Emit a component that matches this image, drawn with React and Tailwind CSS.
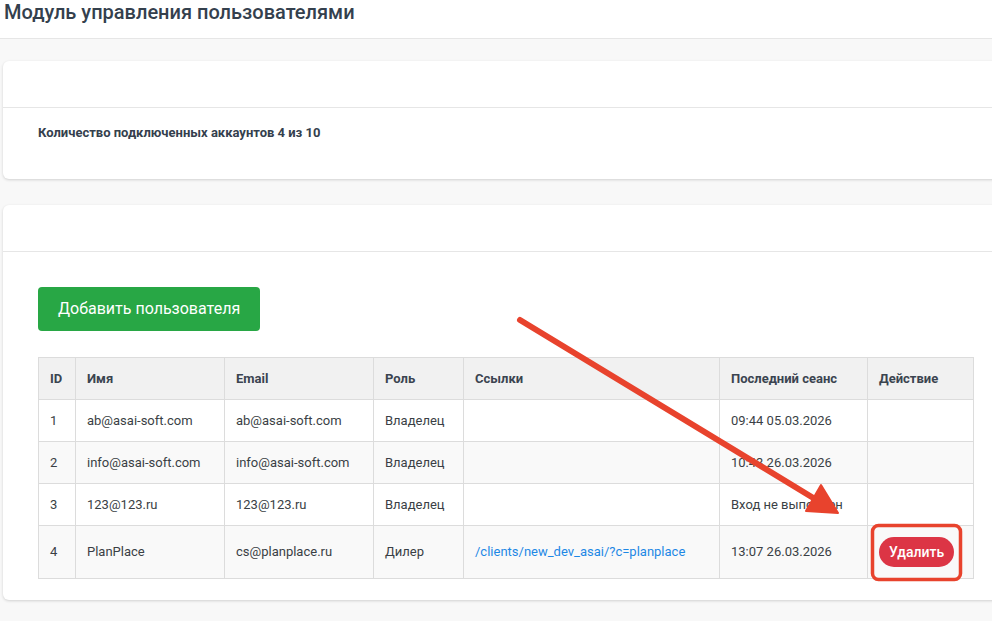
import React from 'react';

const users = [
  { id: 1, name: 'ab@asai-soft.com', email: 'ab@asai-soft.com', role: 'Владелец', link: '', seen: '09:44 05.03.2026' },
  { id: 2, name: 'info@asai-soft.com', email: 'info@asai-soft.com', role: 'Владелец', link: '', seen: '10:43 26.03.2026' },
  { id: 3, name: '123@123.ru', email: '123@123.ru', role: 'Владелец', link: '', seen: 'Вход не выполнен' },
  { id: 4, name: 'PlanPlace', email: 'cs@planplace.ru', role: 'Дилер', link: '/clients/new_dev_asai/?c=planplace', seen: '13:07 26.03.2026', canDelete: true },
];

const th = 'h-[42px] px-[11px] text-left align-middle text-[13px] font-bold text-[#3b4450] border border-[#dcdcdc]';
const td = 'px-[11px] align-middle text-[13px] text-[#3a3f45] border border-[#dcdcdc]';

const Card = ({ children }) => (
  <div className="w-[1010px] rounded-md bg-white shadow-[0_1px_3px_rgba(0,0,0,0.16)]">
    <div className="h-[47px] border-b border-[#e6e6e6]"></div>
    {children}
  </div>
);

export default function App() {
  return (
    <div className="relative min-h-screen overflow-hidden bg-[#f8f8f8]" style={{ fontFamily: 'Roboto, "Liberation Sans", sans-serif' }}>
      <div className="h-[39px] bg-white border-b border-[#e6e6e6] px-[4px]">
        <h1 className="text-[20px] leading-[24px] font-medium text-[#34404d]">Модуль управления пользователями</h1>
      </div>

      <div className="pl-[3px] pt-[22px] flex flex-col gap-[26px]">
        <Card>
          <div className="pl-[35px] pt-[15px] pb-[36px]">
            <p className="text-[13px] leading-[20px] font-bold text-[#34404d]">Количество подключенных аккаунтов 4 из 10</p>
          </div>
        </Card>

        <Card>
          <div className="pl-[35px] pt-[35px] pb-[21px]">
            <button className="h-[44px] px-[20px] rounded bg-[#28a745] text-white text-[16px]">Добавить пользователя</button>
            <table className="mt-[26px] w-[935px] table-fixed border-collapse">
              <colgroup>
                <col className="w-[37px]" />
                <col className="w-[149px]" />
                <col className="w-[149px]" />
                <col className="w-[90px]" />
                <col className="w-[256px]" />
                <col className="w-[148px]" />
                <col className="w-[106px]" />
              </colgroup>
              <thead>
                <tr className="bg-[#f1f1f1]">
                  <th className={th}>ID</th>
                  <th className={th}>Имя</th>
                  <th className={th}>Email</th>
                  <th className={th}>Роль</th>
                  <th className={th}>Ссылки</th>
                  <th className={th}>Последний сеанс</th>
                  <th className={th}>Действие</th>
                </tr>
              </thead>
              <tbody>
                {users.map((u, i) => (
                  <tr key={u.id} className={(i % 2 ? 'bg-[#f9f9f9] ' : 'bg-white ') + (u.canDelete ? 'h-[53px]' : 'h-[42px]')}>
                    <td className={td}>{u.id}</td>
                    <td className={td}>{u.name}</td>
                    <td className={td}>{u.email}</td>
                    <td className={td}>{u.role}</td>
                    <td className={td}>
                      {u.link && <a className="text-[#1e88e5]">{u.link}</a>}
                    </td>
                    <td className={td}>{u.seen}</td>
                    <td className={td}>
                      {u.canDelete && (
                        <button className="h-[30px] px-[10px] rounded-full bg-[#dc3545] text-white text-[14px] font-medium">Удалить</button>
                      )}
                    </td>
                  </tr>
                ))}
              </tbody>
            </table>
          </div>
        </Card>
      </div>

      {/* annotation: arrow pointing at the delete button, plus the frame around it */}
      <svg className="pointer-events-none absolute left-0 top-0" width="992" height="621">
        <line x1="520" y1="320" x2="815" y2="499" stroke="#e8432d" strokeWidth="6" strokeLinecap="round" />
        <polygon points="838,513 806,511 821,485" fill="#e8432d" stroke="#e8432d" strokeWidth="2" strokeLinejoin="round" />
        <rect x="872.5" y="525.5" width="88" height="54" rx="6" fill="none" stroke="#e8432d" strokeWidth="3.5" />
      </svg>
    </div>
  );
}
